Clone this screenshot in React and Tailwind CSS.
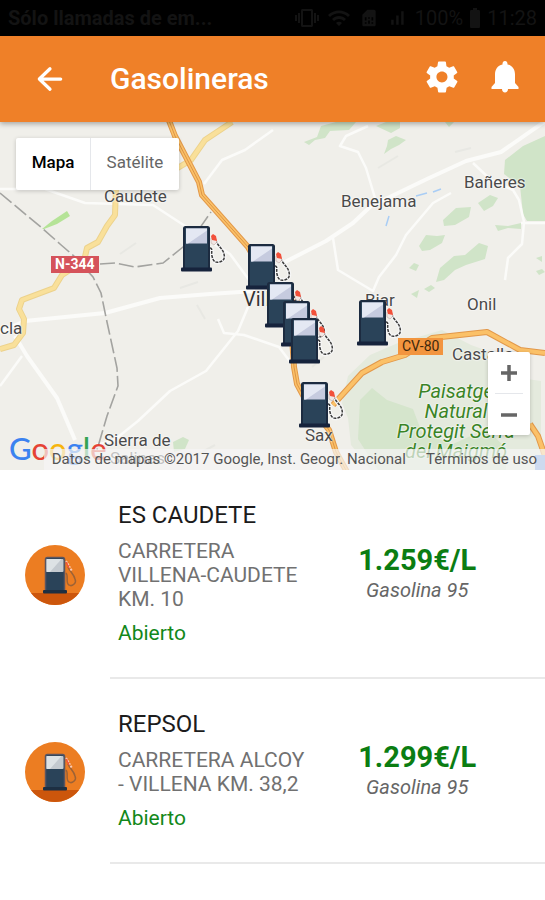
import { IoMdSettings } from 'react-icons/io';
import { MdBatteryFull, MdSignalCellularAlt, MdSimCard, MdVibration, MdWifi } from 'react-icons/md';

const stations = [
  { name: 'ES CAUDETE', address: 'CARRETERA VILLENA-CAUDETE KM. 10', status: 'Abierto', price: '1.259€/L', fuel: 'Gasolina 95' },
  { name: 'REPSOL', address: 'CARRETERA ALCOY - VILLENA KM. 38,2', status: 'Abierto', price: '1.299€/L', fuel: 'Gasolina 95' },
];

// positions on the map canvas
const pins = [
  { x: 181, y: 104 },
  { x: 246, y: 122 },
  { x: 265, y: 160 },
  { x: 281, y: 179 },
  { x: 289, y: 196 },
  { x: 299, y: 260 },
  { x: 357, y: 178 },
];

const places = [
  { name: 'Caudete', x: 104, y: 64 },
  { name: 'Benejama', x: 341, y: 69 },
  { name: 'Bañeres', x: 464, y: 50 },
  { name: 'Biar', x: 365, y: 168 },
  { name: 'Onil', x: 467, y: 172 },
  { name: 'Castalla', x: 452, y: 222 },
  { name: 'Sax', x: 305, y: 303 },
  { name: 'cla', x: 0, y: 196 },
  { name: 'Sierra de', x: 104, y: 308 },
  { name: 'Salinas', x: 110, y: 326 },
];

function Pump({ className }) {
  return (
    <svg viewBox="0 0 46 46" className={className} aria-hidden="true">
      <path d="M29 22c3 0 1 4 2 8 1 5 3 7 7 6 5-1 6-4 5-8-1-5-6-8-8-13" fill="none" stroke="#f7f7f7" strokeWidth="4" />
      <path d="M29 22c3 0 1 4 2 8 1 5 3 7 7 6 5-1 6-4 5-8-1-5-6-8-8-13" fill="none" stroke="#3c3c3c" strokeWidth="1.5" strokeDasharray="3 1" />
      <path d="M30 12l4-1 2 5-3 3-3-2z" fill="#f2e7e4" stroke="#b09a96" strokeWidth=".5" />
      <path d="M30 10l2-2 3 2 1 5-5-1z" fill="#f2503a" />
      <rect x="3" y="1" width="25" height="42" rx="1.5" fill="#2a4359" stroke="#1c2b40" strokeWidth="2" />
      <rect x="5" y="2.5" width="21" height="15" fill="#c6cbdf" />
      <path d="M5 2.5h21v2L7 17.5H5z" fill="#e4e8f3" />
      <rect x="0" y="41.5" width="31" height="4" rx="1" fill="#16233c" />
    </svg>
  );
}

function StationIcon() {
  return (
    <svg viewBox="0 0 60 60" className="size-15 shrink-0" aria-hidden="true">
      <circle cx="30" cy="30" r="30" fill="#ec7d22" />
      <path d="M6 48h48A30 30 0 0 1 6 48z" fill="#cc560c" />
      <path d="M41 28c3 3-1 10 3 12 3 2 8-2 6-6-1-5-5-7-7-12" fill="none" stroke="#9c6236" strokeWidth="1.5" />
      <path d="M41 16l6 10" stroke="#f8cbb8" strokeWidth="2" strokeDasharray="2 1" />
      <path d="M41 17l3 6" stroke="#f2503a" strokeWidth="1.5" />
      <rect x="20.5" y="12.5" width="19" height="34" rx="2" fill="#2a4359" stroke="#5b5560" strokeWidth="1.5" />
      <rect x="21.5" y="14" width="17" height="13" rx="1" fill="#c3c9cf" />
      <path d="M21.5 14h15L25 27h-3.5z" fill="#dde2e5" />
      <rect x="18" y="45" width="24" height="3.5" rx="1" fill="#1d2f42" />
    </svg>
  );
}

function StatusBar() {
  return (
    <div className="flex h-9 items-center justify-between bg-black px-2 text-[20px] leading-6 text-[#131313]">
      <span className="font-bold">Sólo llamadas de em...</span>
      <div className="flex items-center gap-2">
        <MdVibration className="size-6" />
        <MdWifi className="size-6" />
        <MdSimCard className="size-5" />
        <MdSignalCellularAlt className="size-5" />
        <div className="flex items-center">
          <span>100%</span>
          <MdBatteryFull className="size-6" />
          <span>11:28</span>
        </div>
      </div>
    </div>
  );
}

function Header() {
  return (
    <header className="relative z-10 flex h-[86px] items-center bg-[#ef8028] px-5 text-white shadow-[0_2px_5px_rgba(0,0,0,0.3)]">
      <button type="button" aria-label="Volver" className="flex w-15 shrink-0 justify-center">
        <svg viewBox="0 0 28 28" className="size-[26px]" fill="none" stroke="currentColor" strokeWidth="3.5" strokeLinecap="round" strokeLinejoin="round">
          <path d="M25.5 14H3M14 3L2.5 14 14 25" />
        </svg>
      </button>
      <h1 className="ml-[30px] flex-1 text-[30px] leading-9 font-medium">Gasolineras</h1>
      <div className="flex items-center gap-7 pr-1 pb-1">
        <button type="button" aria-label="Ajustes"><IoMdSettings className="size-[38px]" /></button>
        <button type="button" aria-label="Avisos">
          <svg viewBox="0 0 32 32" className="size-8" fill="currentColor">
            <path d="M16 0c1.500 0 2.500 1.200 2.500 2.800v.6C23.500 4.500 26 8.500 26 13.500V22l3.500 4V28h-27v-2l3.500-4v-8.500c0-5 2.500-9 7.500-10.100v-.6C13.500 1.200 14.500 0 16 0zM13 28h6c0 2-1.300 3.500-3 3.500S13 30 13 28z" />
          </svg>
        </button>
      </div>
    </header>
  );
}

function MapDrawing() {
  return (
    <svg viewBox="0 0 545 348" preserveAspectRatio="xMinYMin slice" className="absolute inset-0 size-full" fill="none" aria-hidden="true">
      <rect width="545" height="348" fill="#f0efea" />
      {/* parks */}
      <g fill="#d0e4c8">
        <path d="M304 20l13-5 4-11 15-4h20l-7 8-19 1-5 7-10 2-6 5zM376 4l10-4h14v6l-9 5zM388 18l8-4 10 4-7 5-8 4-7 5 3-8zM445 0h9l-5 5z" />
        <path d="M545 14l-22 10-18 14-1 14 16 12 3 28 4 7h18z" />
        <path d="M436 160l4-14 14-12 11-1 14-12 9 3-3 13-19 6-11 5-11 10zM443 98l13-12 15-1-2 10-14 8-11 1zM478 81l12-8 8 3-5 8-9 5zM419 124l7-11 11 1 8-1-3 8-12 7-8 1zM495 103l13 1 13-3v6l-13-1-10 3zM409 146l5-5 5 2-3 6zM411 172l8-4-2 8zM424 167l7-4 4 3-6 4z" />
        <path d="M173 320l10-5 6 3-4 9-11 3z" />
        <path d="M536 136l6-2v6zM536 149l6-2 3 3-6 3z" />
      </g>
      <path d="M348 254l22-21 28-12 44-13 29 15 33 12 9 20 28 4v89H371l-20-25-3-27-6-15z" fill="#e4eadd" />
      <path d="M360 278l12-12 15 12 26 9 9 24 31 11 33-15 20 19v22H378l-20-31z" fill="#d5e5cc" />
      <path d="M42 107l10-8 15-10 3 5-13 8-13 5z" fill="#b5e397" />
      <path d="M386 104l3-10M416 74l11-3M433 70l8-3" stroke="#a9cdf5" strokeWidth="1.5" />
      {/* hills */}
      <path d="M378 46l20-12M455 30l16-4M180 166l18-6M197 183l8 14M120 132l16-11M193 335l22-12M300 225l14-8M312 245l12-10" stroke="#e8e8e3" strokeWidth="2" />
      {/* minor roads */}
      <g stroke="#fbfbf9" strokeWidth="2.5" strokeLinejoin="round">
        <path d="M283 141l43-22 27-18 18-17 56-27 39-18 35-9 43-30" strokeWidth="4" />
        <path d="M0 210l25-11 80-8 55-15 50-4 45-3" strokeWidth="4" />
        <path d="M15 214l12 20 30 42 18 42" strokeWidth="4" />
        <path d="M22 234L0 264" />
        <path d="M0 67h45l40 14 68 2 29 19 48 30 25 34M204 62l18-24 23-10 28-20" />
        <path d="M375 76l-9-30-8-16-18-6 6-10 22-10M473 41l18 17 22 10 6 10 5 22-2 22-14 14-3 22M545 101h-24M451 71l-18 10-27 32-10 20-17 22-6 14-35-21-5-32" />
        <path d="M248 185l-10 24-32 40-36 20-32 30-25 20-18 4M218 197l6 14 20 2 35 12 15 20" />
      </g>
      {/* boundaries */}
      <path d="M0 71l42 35 18 16 15 13 18 20 8 16 6 29 10 46 1 18-11 30-10 34M100 142l15-1 20 4 28-4 20-16 14-15 14-20" stroke="#a3a3a0" strokeWidth="1.6" strokeDasharray="15 4" />
      {/* secondary roads */}
      <g strokeLinejoin="round">
        <path d="M232 0l-27 18-14 20-20 12-55 15-1 28-8 11-9 16-11 6-3 13-22 14-8 13-32 12-3 9 5 10-1 14-9 12-14 4" stroke="#ecd28c" strokeWidth="6" />
        <path d="M232 0l-27 18-14 20-20 12-55 15-1 28-8 11-9 16-11 6-3 13-22 14-8 13-32 12-3 9 5 10-1 14-9 12-14 4" stroke="#f9e09a" strokeWidth="4" />
      </g>
      {/* motorways */}
      <g strokeLinejoin="round">
        <path d="M168-4l7 18 24 46 3 13 46 52 14 25 30 65 2 30 3 17 7 13 25 33 7 22 11 20M333 283l29-32 20-11 23-7 27-17 55-6 33 18 25 3M530 302l8 12 7 20" stroke="#e2984a" strokeWidth="6" />
        <path d="M168-4l7 18 24 46 3 13 46 52 14 25 30 65 2 30 3 17 7 13 25 33 7 22 11 20M333 283l29-32 20-11 23-7 27-17 55-6 33 18 25 3M530 302l8 12 7 20" stroke="#fbc168" strokeWidth="4" />
        <path d="M168-4l7 18 24 46 3 13 46 52 14 25 30 65 2 30 3 17 7 13 25 33 7 22 11 20" stroke="#dc9448" strokeWidth="1" />
      </g>
      {/* road badge at the edge */}
      <rect x="535" y="333" width="14" height="15" fill="#6f9be0" />
    </svg>
  );
}

function StationMap() {
  return (
    <section aria-label="Mapa de gasolineras" className="relative h-[348px] overflow-hidden">
      <MapDrawing />

      {places.map((place) => (
        <span
          key={place.name}
          className="absolute text-[17px] leading-5 whitespace-nowrap text-[#4a4a4a] [text-shadow:0_0_2px_#fff,0_0_2px_#fff]"
          style={{ left: place.x, top: place.y }}
        >
          {place.name}
        </span>
      ))}
      <span className="absolute top-[165px] left-[243px] text-[20px] leading-6 text-[#333] [text-shadow:0_0_2px_#fff]">Villena</span>
      <span className="absolute top-[134px] left-[51px] bg-[#d5535b] px-1 text-[14px] leading-[17px] font-bold text-white">N-344</span>
      <span className="absolute top-[216px] left-[398px] bg-[#f2953f] px-1 text-[14px] leading-[17px] text-[#40280c]">CV-80</span>
      <p className="absolute top-[259px] left-[386px] w-[140px] text-center text-[20px] leading-5 text-[#3a8427] italic [text-shadow:0_0_2px_#fff,0_0_2px_#fff]">
        Paisatge<br />Natural<br />Protegit Serra<br />del Maigmó
      </p>

      {pins.map((pin) => (
        <div key={`${pin.x}-${pin.y}`} className="absolute" style={{ left: pin.x, top: pin.y }}>
          <Pump className="size-[46px]" />
        </div>
      ))}

      <div className="absolute top-4 left-4 flex h-[52px] rounded-xs bg-white text-[17px] leading-5 shadow-[0_1px_4px_rgba(0,0,0,0.2)]">
        <button type="button" className="w-[75px] border-r border-gray-200 pb-1 font-medium text-black">Mapa</button>
        <button type="button" className="w-[88px] pb-1 text-[#666]">Satélite</button>
      </div>

      <div className="absolute right-[15px] bottom-[35px] flex w-[42px] flex-col items-center rounded-xs bg-white shadow-[0_1px_4px_rgba(0,0,0,0.2)]">
        <button type="button" aria-label="Acercar" className="flex h-[41px] w-full items-center justify-center">
          <svg viewBox="0 0 16 16" className="size-4" stroke="#666" strokeWidth="3.5"><path d="M0 8h16M8 0v16" /></svg>
        </button>
        <div className="h-px w-7 bg-gray-200" />
        <button type="button" aria-label="Alejar" className="flex h-[41px] w-full items-center justify-center">
          <svg viewBox="0 0 16 16" className="size-4" stroke="#666" strokeWidth="3.5"><path d="M0 8h16" /></svg>
        </button>
      </div>

      <div className="absolute bottom-0 left-[9px] font-['Lato',sans-serif] text-[31px] leading-11 font-medium">
        <span className="text-[#3b82f0]">G</span>
        <span className="text-[#e54335]">o</span>
        <span className="text-[#f6b50e]">o</span>
        <span className="text-[#3b82f0]">g</span>
        <span className="text-[#34a353]">l</span>
        <span className="text-[#e54335]">e</span>
      </div>

      <div className="absolute right-0 bottom-0 flex h-[21px] bg-[#f5f5f5]/70 px-2 text-[15px] leading-[21px] whitespace-nowrap text-[#555]">
        <span>Datos de mapas ©2017 Google, Inst. Geogr. Nacional</span>
        <a href="#terminos" className="ml-5">Términos de uso</a>
      </div>
    </section>
  );
}

function StationRow({ station }) {
  return (
    <li className="flex items-stretch">
      <div className="flex w-[110px] shrink-0 items-center pl-[25px]">
        <StationIcon />
      </div>
      <div className="grid flex-1 grid-cols-2 items-center border-b-2 border-[#e9e9e9] pt-[31px] pr-7 pb-8 pl-2">
        <div className="pr-2">
          <h2 className="text-[24px] leading-7 text-[#1c1c1c]">{station.name}</h2>
          <p className="mt-2.5 text-[21px] leading-6 text-[#717171]">{station.address}</p>
          <p className="mt-2.5 text-[21px] leading-6 text-[#12881a]">{station.status}</p>
        </div>
        <div className="pt-0.5 text-center">
          <p className="text-[29px] leading-8 font-bold text-[#0b7d12]">{station.price}</p>
          <p className="text-[20px] leading-7 text-[#666] italic">{station.fuel}</p>
        </div>
      </div>
    </li>
  );
}

export default function App() {
  return (
    <div className="min-h-screen bg-white font-['Roboto',sans-serif]">
      <StatusBar />
      <Header />
      <main>
        <StationMap />
        <ul>
          {stations.map((station) => (
            <StationRow key={station.name} station={station} />
          ))}
        </ul>
      </main>
    </div>
  );
}
